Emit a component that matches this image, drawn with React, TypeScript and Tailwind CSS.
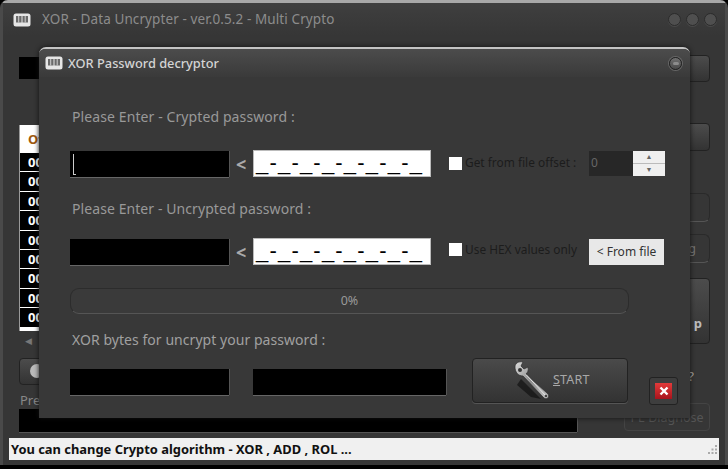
const sans = "font-['Noto_Sans',sans-serif]";

function AppIcon() {
  return (
    <svg width="18" height="14" viewBox="0 0 18 14" className="shrink-0">
      <rect x="0.5" y="0.5" width="17" height="13" rx="2.5" fill="#e6e6e6" />
      <rect x="3" y="3" width="5.5" height="6.5" fill="#6a6a6a" />
      <rect x="9.5" y="3" width="5.5" height="6.5" fill="#6a6a6a" />
      <rect x="5.2" y="3" width="1" height="6.5" fill="#cfcfcf" />
      <rect x="11.7" y="3" width="1" height="6.5" fill="#cfcfcf" />
    </svg>
  );
}

function Dot() {
  return (
    <div className="h-[13px] w-[13px] rounded-full border border-[#2b2b2b] bg-[#4f4f4f] shadow-[0_1px_0_#4a4a4a]" />
  );
}

function Black({ className }: { className: string }) {
  return <div className={"bg-black shadow-[0_1px_0_#666,1px_0_0_#555] " + className} />;
}

function Mask() {
  return (
    <div className="flex h-[27px] w-[178px] items-end overflow-hidden border border-[#bbb] bg-white pl-[2px] font-['Liberation_Sans',sans-serif] text-[22px] leading-[26px] tracking-[1.2px] text-black">
      _-_-_-_-_-_-_-_
    </div>
  );
}

function Check({ label }: { label: string }) {
  return (
    <div className="flex w-[140px] items-center gap-[3px]">
      <div className="h-[13px] w-[13px] shrink-0 bg-white" />
      <span className="text-[11.9px] leading-none text-[#1c1c1c]">{label}</span>
    </div>
  );
}

function Wrench() {
  return (
    <svg width="40" height="40" viewBox="0 0 40 40" className="shrink-0">
      <defs>
        <linearGradient id="metal" x1="0" y1="0" x2="1" y2="1">
          <stop offset="0" stopColor="#dcdcdc" />
          <stop offset="0.5" stopColor="#8c8c8c" />
          <stop offset="1" stopColor="#c8c8c8" />
        </linearGradient>
      </defs>
      <path d="M8 18 L28 38 L18 36 L4 24 Z" fill="#111" opacity="0.7" />
      <path
        d="M2 6 C2 2 6 0 10 1 L8 5 L11 8 L15 6 C16 10 14 12 13 13 L35 33 C37 36 34 39 31 37 L10 15 C5 15 2 11 2 6 Z"
        fill="url(#metal)"
        stroke="#2c2c2c"
        strokeWidth="0.7"
      />
      <path d="M13 13.5 L33 35" stroke="#ececec" strokeWidth="0.9" />
      <circle cx="33" cy="35" r="1.3" fill="#444" />
      <circle cx="7" cy="9" r="2" fill="#333" />
    </svg>
  );
}

function Dialog() {
  return (
    <div className="absolute left-[39px] top-[47px] h-[371px] w-[651px] rounded-t-[7px] border-t-2 border-[#c4c4c4] bg-[#383838] shadow-[0_0_5px_#111]">
      <div className="flex h-[28px] items-center justify-between rounded-t-[6px] bg-gradient-to-b from-[#4c4c4c] to-[#3a3a3a] pl-[6px] pr-[8px]">
        <div className="flex items-center gap-[5px]">
          <AppIcon />
          <span className="text-[12.8px] font-medium leading-none text-[#d4d4d4]">XOR Password decryptor</span>
        </div>
        <div className="flex h-[13px] w-[13px] items-center justify-center rounded-full border border-[#222] bg-gradient-to-b from-[#707070] to-[#4a4a4a] shadow-[0_0_0_1px_#666]">
          <div className="h-[3px] w-[6px] rounded-full bg-[#8c8c8c]" />
        </div>
      </div>

      <div className="flex flex-col pl-[31px]">
        <p className="ml-[2px] mt-[30px] text-[14px] leading-[20px] tracking-[0.1px] text-[#999]">
          Please Enter - Crypted password :
        </p>
        <div className="mt-[23px] flex h-[27px] items-center">
          <div className="relative h-[26px] w-[159px] bg-black shadow-[0_1px_0_#666,1px_0_0_#555]">
            <div className="absolute left-[3px] top-[3px] h-[20px] w-[1px] bg-[#ccc]" />
            <div className="absolute bottom-[2px] left-[3px] h-[1px] w-[3px] bg-[#ccc]" />
          </div>
          <span className="ml-[7px] w-[17px] text-[18px] font-bold leading-none text-[#aaa]">&lt;</span>
          <Mask />
          <div className="ml-[18px] -mt-[1px]">
            <Check label="Get from file offset :" />
          </div>
          <div className="-mt-[1px] flex h-[25px] w-[44px] items-center bg-[#272727] pl-[2px] text-[12px] text-[#666]">0</div>
          <div className="-mt-[1px] flex h-[25px] w-[32px] flex-col gap-[1px] bg-[#bbb]">
            <div className="flex flex-1 items-center justify-center bg-[#efefef] text-[7px] leading-none text-[#666]">▲</div>
            <div className="flex flex-1 items-center justify-center bg-[#efefef] text-[7px] leading-none text-[#666]">▼</div>
          </div>
        </div>

        <p className="ml-[2px] mt-[22px] text-[14px] leading-[20px] tracking-[0.08px] text-[#999]">
          Please Enter - Uncrypted password :
        </p>
        <div className="mt-[19px] flex h-[27px] items-center">
          <Black className="h-[26px] w-[159px]" />
          <span className="ml-[7px] w-[17px] text-[18px] font-bold leading-none text-[#aaa]">&lt;</span>
          <Mask />
          <div className="ml-[18px] -mt-[4px]">
            <Check label="Use HEX values only" />
          </div>
          <button className="h-[26px] w-[75px] bg-[#e8e8e8] text-[12px] leading-none text-[#333]">&lt; From file</button>
        </div>

        <div className="mt-[23px] flex h-[26px] w-[559px] items-center justify-center rounded-[9px] border border-[#2c2c2c] border-b-[#555] bg-[#3a3a3a] text-[12.5px] text-[#999]">
          0%
        </div>

        <p className="ml-[2px] mt-[16px] text-[14px] leading-[20px] tracking-[0.05px] text-[#a0a0a0]">
          XOR bytes for uncrypt your password :
        </p>

        <div className="relative mt-[8px] flex">
          <div className="mt-[11px] flex gap-[24px]">
            <Black className="h-[26px] w-[159px]" />
            <Black className="h-[26px] w-[193px]" />
          </div>
          <button className="ml-[26px] flex h-[45px] w-[156px] items-center rounded-[4px] border border-[#222] bg-gradient-to-b from-[#4a4a4a] to-[#333] pl-[40px] shadow-[0_1px_0_#555]">
            <Wrench />
            <span className="text-[12.5px] leading-none tracking-[0.2px] text-[#a8a8a8]">
              <span className="underline">S</span>TART
            </span>
          </button>
          <button className="ml-[21px] mt-[19px] flex h-[28px] w-[29px] items-center justify-center rounded-[3px] border border-[#222] bg-[#3e3e3e]">
            <span className="flex h-[16px] w-[17px] items-center justify-center bg-gradient-to-b from-[#e23a3a] to-[#a9121c]">
              <svg width="10" height="10" viewBox="0 0 10 10">
                <path d="M1.5 1.5 L8.5 8.5 M8.5 1.5 L1.5 8.5" stroke="#fff" strokeWidth="2.4" />
              </svg>
            </span>
          </button>
        </div>
      </div>
    </div>
  );
}

function GreyButton({ className, children }: { className: string; children?: React.ReactNode }) {
  return (
    <div className={"rounded-[4px] border border-[#222] bg-gradient-to-b from-[#4c4c4c] to-[#333] " + className}>
      {children}
    </div>
  );
}

export default function App() {
  const rows = Array.from({ length: 9 });
  return (
    <div className={"relative flex h-[469px] w-[728px] flex-col overflow-hidden bg-black text-[13px] " + sans}>
      <div className="flex h-[465px] flex-col rounded-t-[8px] border-x-[3px] border-t-[3px] border-x-[#4a4a4a] border-t-[#a8a8a8] bg-[#363636]">
        {/* title bar */}
        <div className="flex h-[33px] items-center justify-between bg-gradient-to-b from-[#3f3f3f] to-[#363636] pl-[10px] pr-[8px]">
          <div className="flex items-center gap-[11px]">
            <AppIcon />
            <span className="text-[13.5px] leading-none tracking-[0.1px] text-[#8c8c8c]">
              XOR - Data Uncrypter - ver.0.5.2 - Multi Crypto
            </span>
          </div>
          <div className="flex gap-[5px]">
            <Dot />
            <Dot />
            <Dot />
          </div>
        </div>

        {/* main form, mostly covered by the dialog */}
        <div className="flex flex-1 justify-between pl-[16px] pr-[15px]">
          <div className="flex w-[558px] flex-col">
            <div className="mt-[21px] h-[22px] w-[60px] bg-black" />
            <div className="mt-[46px] w-[100px] border-l border-[#999] bg-black">
              <div className="h-[28px] bg-white pl-[8px] text-[13px] font-bold leading-[28px] text-[#a05a10]">Offset</div>
              {rows.map((_, i) => (
                <div key={i} className="h-[19.4px] border-b border-white pl-[8px] text-[13px] font-bold leading-[18px] text-white">
                  00000
                </div>
              ))}
              <div className="h-[3px] bg-white" />
            </div>
            <span className="ml-[6px] mt-[4px] text-[9px] leading-[12px] text-[#777]">◀</span>
            <GreyButton className="mt-[11px] flex h-[27px] w-[60px] items-center pl-[10px]">
              <div className="h-[14px] w-[14px] rounded-full bg-[#bbb]" />
            </GreyButton>
            <span className="ml-[1px] mt-[6px] text-[13px] leading-[18px] text-[#888]">Press</span>
            <div className="h-[23px] w-full bg-black shadow-[0_1px_0_#555,1px_0_0_#555]" />
          </div>

          <div className="flex w-[86px] flex-col items-end">
            <GreyButton className="mt-[19px] h-[27px] w-[60px]" />
            <GreyButton className="mt-[41px] h-[28px] w-[60px]" />
            <div className="mt-[42px] h-[29px] w-[60px] rounded-[6px] border border-[#2a2a2a] border-b-[#555]" />
            <div className="mt-[12px] flex h-[29px] w-[60px] items-center justify-end rounded-[6px] border border-[#2a2a2a] border-b-[#555] pr-[13px] text-[12px] text-[#777]">
              g
            </div>
            <GreyButton className="mt-[15px] flex h-[66px] w-[60px] items-end justify-end pb-[10px] pr-[7px] text-[13px] font-bold text-[#bbb]">
              p
            </GreyButton>
            <span className="mt-[23px] pr-[16px] text-[13px] leading-[18px] text-[#aaa]">?</span>
            <div className="mt-[18px] flex h-[28px] w-[86px] items-center justify-center rounded-[4px] border border-[#444] pt-[2px] text-[12.5px] leading-none text-[#555]">
              PE Diagnose
            </div>
          </div>
        </div>

        {/* status bar */}
        <div className="mb-[5px] ml-[6px] mr-[6px] flex h-[22px] items-center justify-between bg-[#f0f0f0] pl-[2px] pr-[2px]">
          <span className="text-[12.9px] font-bold leading-none text-[#111]">You can change Crypto algorithm - XOR , ADD , ROL ...</span>
          <svg width="9" height="9" viewBox="0 0 9 9">
            <g fill="#aaa">
              <rect x="7" y="0" width="2" height="2" />
              <rect x="3.5" y="3.5" width="2" height="2" />
              <rect x="7" y="3.5" width="2" height="2" />
              <rect x="0" y="7" width="2" height="2" />
              <rect x="3.5" y="7" width="2" height="2" />
              <rect x="7" y="7" width="2" height="2" />
            </g>
          </svg>
        </div>
      </div>

      <Dialog />
    </div>
  );
}
